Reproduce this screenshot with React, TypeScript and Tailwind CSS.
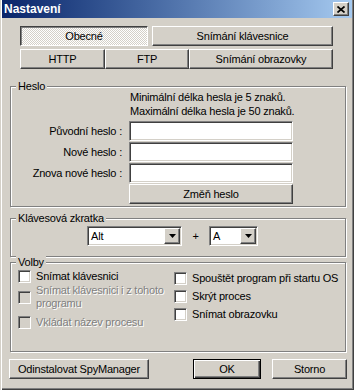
import React from 'react';

// classic Win2k bevels
const sunken =
  'border border-t-[#808080] border-l-[#808080] border-b-white border-r-white shadow-[inset_1px_1px_0_#404040,inset_-1px_-1px_0_#d4d0c8]';
const raised =
  'bg-[#d4d0c8] border border-t-white border-l-white border-b-[#404040] border-r-[#404040] shadow-[inset_-1px_-1px_0_#808080]';
const pressed =
  'border border-t-[#404040] border-l-[#404040] border-b-white border-r-white shadow-[inset_1px_1px_0_#808080] bg-[image:repeating-conic-gradient(#ffffff_0_25%,#d4d0c8_0_50%)] bg-[length:2px_2px]';

const Group: React.FC<{ title: string; className?: string; children?: React.ReactNode }> = ({
  title,
  className = '',
  children,
}) => (
  <div className={`relative ml-[8px] w-[336px] border border-[#808080] shadow-[inset_1px_1px_0_#fff,1px_1px_0_#fff] ${className}`}>
    <span className="absolute -top-[7px] left-[5px] px-[2px] bg-[#d4d0c8] leading-[13px]">{title}</span>
    {children}
  </div>
);

const Check: React.FC<{ disabled?: boolean; children: React.ReactNode; className?: string }> = ({
  disabled,
  children,
  className = '',
}) => (
  <div className={`flex items-center gap-[5px] ${className}`}>
    <span className={`${sunken} w-[13px] h-[13px] shrink-0 ${disabled ? 'bg-[#d4d0c8]' : 'bg-white'}`} />
    <span
      className={`leading-[13px] whitespace-nowrap ${
        disabled ? 'text-[#808080] [text-shadow:1px_1px_0_#fff]' : ''
      }`}
    >
      {children}
    </span>
  </div>
);

const Combo: React.FC<{ value: string; width: string }> = ({ value, width }) => (
  <div className={`${sunken} bg-white p-[1px] flex h-[20px] ${width}`}>
    <span className="flex-1 pl-[2px] leading-[16px]">{value}</span>
    <span className={`${raised} w-[16px] h-[16px] flex items-center justify-center`}>
      <svg width="7" height="4" viewBox="0 0 7 4">
        <polygon points="0,0 7,0 3.5,4" fill="#000" />
      </svg>
    </span>
  </div>
);

const Btn: React.FC<{ className?: string; children: React.ReactNode }> = ({ className = '', children }) => (
  <div className={`${raised} h-[20px] flex items-center justify-center leading-[13px] whitespace-nowrap ${className}`}>{children}</div>
);

export default function App() {
  return (
    <div className="w-[354px] h-[390px] overflow-hidden bg-[#d4d0c8] px-[2px] pb-[2px] shadow-[inset_1px_0_0_#d4d0c8,inset_2px_0_0_#fff,inset_-1px_-1px_0_#404040,inset_-2px_-2px_0_#808080] font-['Liberation_Sans',Arial,sans-serif] text-[11px] tracking-[-0.2px] text-black">
      {/* title bar */}
      <div className="h-[18px] bg-linear-to-r from-[#0a246a] to-[#a6caf0] flex items-center justify-between pl-[2px] pr-[3px]">
        <span className="text-white font-bold text-[12px] tracking-normal leading-[14px]">Nastavení</span>
        <span className={`${raised} w-[16px] h-[14px] flex items-center justify-center`}>
          <svg width="8" height="7" viewBox="0 0 8 7">
            <path d="M0.5 0.5L7.5 6.5M7.5 0.5L0.5 6.5" stroke="#000" strokeWidth="1.7" />
          </svg>
        </span>
      </div>

      {/* tabs */}
      <div className="ml-[18px] mt-[8px] w-[313px] flex flex-col gap-[3px]">
        <div className="flex gap-[4px]">
          <div className={`${pressed} w-[128px] h-[20px] flex items-center justify-center pt-[1px] leading-[13px]`}>Obecné</div>
          <Btn className="w-[181px]">Snímání klávesnice</Btn>
        </div>
        <div className="flex">
          <Btn className="w-[85px]">HTTP</Btn>
          <Btn className="w-[84px]">FTP</Btn>
          <Btn className="w-[144px]">Snímání obrazovky</Btn>
        </div>
      </div>

      {/* Heslo */}
      <Group title="Heslo" className="mt-[17px] h-[121px] pt-[3px]">
        <div className="grid grid-cols-[114px_164px] gap-x-[4px] gap-y-[1px] items-center">
          <div />
          <div className="pl-[1px] leading-[14px] mb-[2px] whitespace-nowrap">
            Minimální délka hesla je 5 znaků.
            <br />
            Maximální délka hesla je 50 znaků.
          </div>
          <div className="text-right pr-[3px] whitespace-nowrap">Původní heslo :</div>
          <div className={`${sunken} bg-white h-[20px]`} />
          <div className="text-right pr-[3px] whitespace-nowrap">Nové heslo :</div>
          <div className={`${sunken} bg-white h-[20px]`} />
          <div className="text-right pr-[3px] whitespace-nowrap">Znova nové heslo :</div>
          <div className={`${sunken} bg-white h-[20px]`} />
          <div />
          <Btn>Změň heslo</Btn>
        </div>
      </Group>

      {/* Klávesová zkratka */}
      <Group title="Klávesová zkratka" className="mt-[11px] h-[39px] pt-[7px] pl-[76px] flex items-start">
        <Combo value="Alt" width="w-[95px]" />
        <span className="w-[27px] text-center leading-[20px]">+</span>
        <Combo value="A" width="w-[49px]" />
      </Group>

      {/* Volby */}
      <Group title="Volby" className="mt-[5px] h-[90px] flex">
        <div className="w-[163px] pl-[7px] pt-[7px] flex flex-col">
          <Check>Snímat klávesnici</Check>
          <Check disabled className="mt-[1px] h-[26px]">
            Snímat klávesnici i z tohoto
            <br />
            programu
          </Check>
          <Check disabled className="mt-[6px]">Vkládat název procesu</Check>
        </div>
        <div className="pt-[9px] flex flex-col gap-[5px]">
          <Check>Spouštět program při startu OS</Check>
          <Check>Skrýt proces</Check>
          <Check>Snímat obrazovku</Check>
        </div>
      </Group>

      {/* bottom buttons */}
      <div className="mt-[7px] pl-[7px] flex">
        <Btn className="w-[140px]">Odinstalovat SpyManager</Btn>
        <div className="ml-[44px] w-[68px] h-[20px] border border-black bg-[#d4d0c8] shadow-[inset_1px_1px_0_#fff,inset_-1px_-1px_0_#404040,inset_-2px_-2px_0_#808080] flex items-center justify-center leading-[13px]">
          OK
        </div>
        <Btn className="ml-[11px] w-[75px]">Storno</Btn>
      </div>
    </div>
  );
}
